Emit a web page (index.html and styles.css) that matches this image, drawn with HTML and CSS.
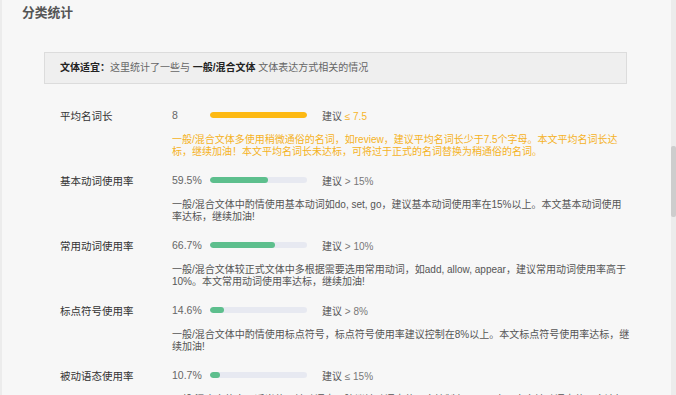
FILE: index.html
```html
<!DOCTYPE html>
<html lang="zh-CN">
<head>
    <meta charset="UTF-8">
    <title>分类统计</title>
    <link rel="stylesheet" href="styles.css">
</head>
<body>
    <div class="page">
        <div class="main">
            <h2 class="section-title">分类统计</h2>
            <div class="notice">
                <b>文体适宜：</b>这里统计了一些与 <b>一般/混合文体</b> 文体表达方式相关的情况
            </div>
            <div class="stats">
                <div class="stat">
                    <div class="stat-head">
                        <span class="label">平均名词长</span>
                        <span class="value">8</span>
                        <span class="bar"><span class="fill warn" style="width: 100%"></span></span>
                        <span class="advice">建议 <em class="warn-text">≤ 7.5</em></span>
                    </div>
                    <p class="desc warn-text">一般/混合文体多使用稍微通俗的名词，如review，建议平均名词长少于7.5个字母。本文平均名词长达<br>标，继续加油！本文平均名词长未达标，可将过于正式的名词替换为稍通俗的名词。</p>
                </div>
                <div class="stat">
                    <div class="stat-head">
                        <span class="label">基本动词使用率</span>
                        <span class="value">59.5%</span>
                        <span class="bar"><span class="fill" style="width: 59.5%"></span></span>
                        <span class="advice">建议 <em>&gt; 15%</em></span>
                    </div>
                    <p class="desc">一般/混合文体中酌情使用基本动词如do, set, go，建议基本动词使用率在15%以上。本文基本动词使用<br>率达标，继续加油!</p>
                </div>
                <div class="stat">
                    <div class="stat-head">
                        <span class="label">常用动词使用率</span>
                        <span class="value">66.7%</span>
                        <span class="bar"><span class="fill" style="width: 66.7%"></span></span>
                        <span class="advice">建议 <em>&gt; 10%</em></span>
                    </div>
                    <p class="desc">一般/混合文体较正式文体中多根据需要选用常用动词，如add, allow, appear，建议常用动词使用率高于<br>10%。本文常用动词使用率达标，继续加油!</p>
                </div>
                <div class="stat">
                    <div class="stat-head">
                        <span class="label">标点符号使用率</span>
                        <span class="value">14.6%</span>
                        <span class="bar"><span class="fill" style="width: 14.6%"></span></span>
                        <span class="advice">建议 <em>&gt; 8%</em></span>
                    </div>
                    <p class="desc">一般/混合文体中酌情使用标点符号，标点符号使用率建议控制在8%以上。本文标点符号使用率达标，继<br>续加油!</p>
                </div>
                <div class="stat">
                    <div class="stat-head">
                        <span class="label">被动语态使用率</span>
                        <span class="value">10.7%</span>
                        <span class="bar"><span class="fill" style="width: 10.7%"></span></span>
                        <span class="advice">建议 <em>≤ 15%</em></span>
                    </div>
                    <p class="desc">一般/混合文体中可适当使用被动语态，建议被动语态使用率控制在15%以内。本文被动语态使用率达标，<br>继续加油!</p>
                </div>
            </div>
        </div>
        <div class="scrollbar"><div class="thumb"></div></div>
    </div>
</body>
</html>
```

FILE: styles.css
```css
body {
    margin: 0;
    padding: 0;
    background-color: #f7f7f7;
    font-family: "Liberation Sans", "Noto Sans CJK SC", sans-serif;
    font-size: 10.5px;
    color: #333;
}
.page {
    display: flex;
    height: 395px;
    overflow: hidden;
}
.main {
    flex: 1;
    border-left: 2px solid #ececec;
    padding: 5px 0 0 20px;
}
.section-title {
    margin: 0;
    font-size: 12.75px;
    line-height: 16px;
    font-weight: bold;
    color: #555;
}
.notice {
    box-sizing: border-box;
    width: 583px;
    height: 32px;
    margin: 31px 0 0 22px;
    padding-left: 15px;
    background-color: #efefef;
    border: 1px solid #dcdcdc;
    line-height: 30px;
    font-size: 10px;
    color: #666;
}
.notice b {
    color: #222;
    font-weight: bold;
}
.stats {
    margin: 23px 0 0 38px;
}
.stat {
    margin-bottom: 14px;
}
.stat-head {
    display: flex;
    align-items: center;
    height: 16px;
}
.label {
    width: 112px;
    color: #333;
}
.value {
    width: 38px;
    color: #666;
}
.bar {
    display: block;
    width: 97px;
    height: 6px;
    border-radius: 3px;
    background-color: #e7e9f1;
    overflow: hidden;
}
.fill {
    display: block;
    height: 100%;
    border-radius: 3px;
    background-color: #5dbf8d;
}
.fill.warn {
    background-color: #fdb913;
}
.advice {
    margin-left: 15px;
    font-size: 10px;
    color: #555;
}
.advice em {
    font-style: normal;
    color: #777;
}
.advice em.warn-text {
    color: #f6b52a;
}
.desc {
    width: 464px;
    margin: 11px 0 0 112px;
    font-size: 10px;
    line-height: 12px;
    color: #555;
}
.desc.warn-text {
    color: #f5b21e;
}
.scrollbar {
    width: 5px;
    background-color: #ececec;
}
.thumb {
    height: 71px;
    margin-top: 146px;
    border-radius: 2px;
    background-color: #cdcdcd;
}
```
